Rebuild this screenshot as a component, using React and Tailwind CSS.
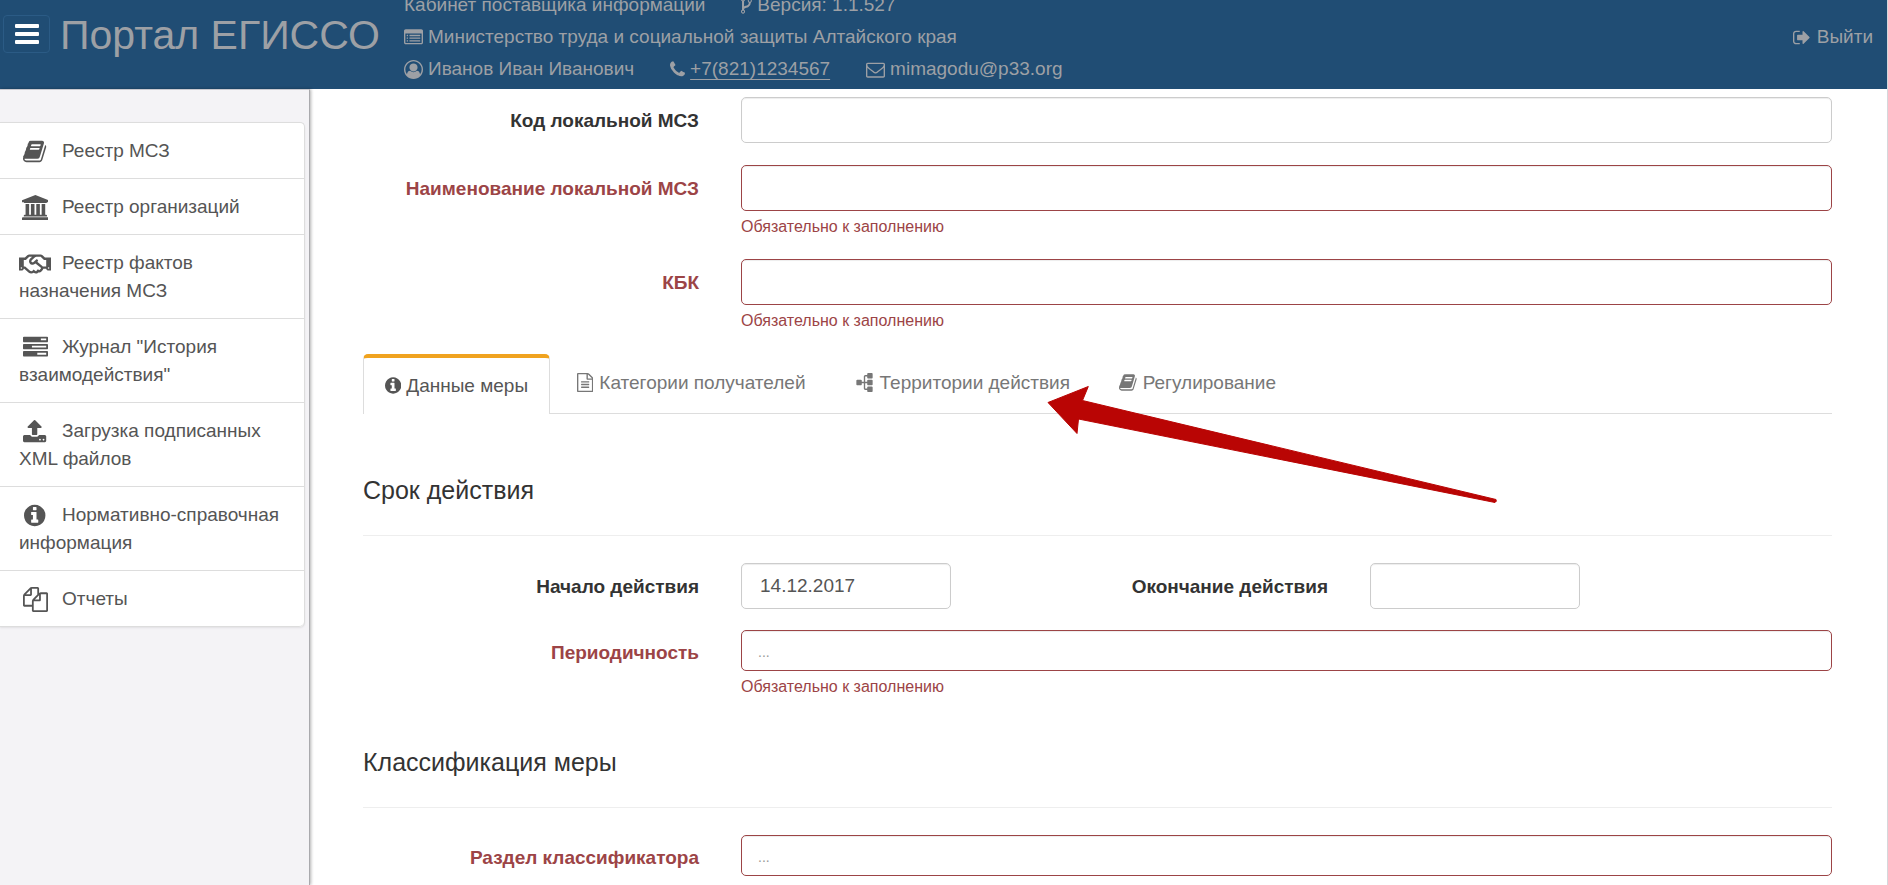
import React from "react";
import { FaRegHandshake } from "react-icons/fa";

const ICONS = {
  book: ["64 0 1664 1792", "M1703 478q40 57 18 129l-275 906q-19 64-76.5 107.5t-122.5 43.5h-923q-77 0-148.5-53.5t-99.5-131.5q-24-67-2-127 0-4 3-27t4-37q1-8-3-21.5t-3-19.5q2-11 8-21t16.5-23.5 16.5-23.5q23-38 45-91.5t30-91.5q3-10 .5-30t-.5-28q3-11 17-28t17-23q21-36 42-92t25-90q1-9-2.5-32t.5-28q4-13 22-30.5t22-22.5q19-26 42.5-84.5t27.5-96.5q1-8-3-25.5t-2-26.5q2-8 9-18t18-23 17-21q8-12 16.5-30.5t15-35 16-36 19.5-32 26.5-23.5 36-11.5 47.5 5.5l-1 3q38-9 51-9h761q74 0 114 56t18 130l-274 906q-36 119-71.5 153.5t-128.5 34.5h-869q-27 0-38 15-11 16-1 43 24 70 144 70h923q29 0 56-15.5t35-41.5l300-987q7-22 5-57 38 15 59 43zm-1064 2q-4 13 2 22.5t20 9.5h608q13 0 25.5-9.5t16.5-22.5l21-64q4-13-2-22.5t-20-9.5h-608q-13 0-25.5 9.5t-16.5 22.5zm-83 256q-4 13 2 22.5t20 9.5h608q13 0 25.5-9.5t16.5-22.5l21-64q4-13-2-22.5t-20-9.5h-608q-13 0-25.5 9.5t-16.5 22.5z"],
  bank: ["0 0 1920 1792", "M960 0l960 384v128h-128q0 26-20.5 45t-48.5 19h-1526q-28 0-48.5-19t-20.5-45h-128v-128zm-704 640h256v768h128v-768h256v768h128v-768h256v768h128v-768h256v768h59q28 0 48.5 19t20.5 45v64h-1664v-64q0-26 20.5-45t48.5-19h59v-768zm1595 960q28 0 48.5 19t20.5 45v128h-1920v-128q0-26 20.5-45t48.5-19h1782z"],
  tasks: ["0 0 1792 1792", "M1024 1408h640v-128h-640v128zm-384-512h1024v-128h-1024v128zm640-512h384v-128h-384v128zm512 832v256q0 26-19 45t-45 19h-1664q-26 0-45-19t-19-45v-256q0-26 19-45t45-19h1664q26 0 45 19t19 45zm0-512v256q0 26-19 45t-45 19h-1664q-26 0-45-19t-19-45v-256q0-26 19-45t45-19h1664q26 0 45 19t19 45zm0-512v256q0 26-19 45t-45 19h-1664q-26 0-45-19t-19-45v-256q0-26 19-45t45-19h1664q26 0 45 19t19 45z"],
  upload: ["64 0 1664 1792", "M1344 1472q0-26-19-45t-45-19-45 19-19 45 19 45 45 19 45-19 19-45zm256 0q0-26-19-45t-45-19-45 19-19 45 19 45 45 19 45-19 19-45zm128-224v320q0 40-28 68t-68 28h-1472q-40 0-68-28t-28-68v-320q0-40 28-68t68-28h427q21 56 70.5 92t110.5 36h256q61 0 110.5-36t70.5-92h427q40 0 68 28t28 68zm-325-648q-17 40-59 40h-256v448q0 26-19 45t-45 19h-256q-26 0-45-19t-19-45v-448h-256q-42 0-59-40-17-39 14-69l448-448q18-19 45-19t45 19l448 448q31 30 14 69z"],
  info: ["128 0 1536 1792", "M1152 1376v-160q0-14-9-23t-23-9h-96v-512q0-14-9-23t-23-9h-320q-14 0-23 9t-9 23v160q0 14 9 23t23 9h96v320h-96q-14 0-23 9t-9 23v160q0 14 9 23t23 9h448q14 0 23-9t9-23zm-128-896v-160q0-14-9-23t-23-9h-192q-14 0-23 9t-9 23v160q0 14 9 23t23 9h192q14 0 23-9t9-23zm640 416q0 209-103 385.5t-279.5 279.5-385.5 103-385.5-103-279.5-279.5-103-385.5 103-385.5 279.5-279.5 385.5-103 385.5 103 279.5 279.5 103 385.5z"],
  files: ["0 0 1792 1792", "M1696 384q40 0 68 28t28 68v1216q0 40-28 68t-68 28h-960q-40 0-68-28t-28-68v-288h-544q-40 0-68-28t-28-68v-672q0-40 20-88t48-76l408-408q28-28 76-48t88-20h416q40 0 68 28t28 68v328q68-40 128-40h416zm-544 213l-299 299h299v-299zm-640-384l-299 299h299v-299zm196 647l316-316v-416h-384v416q0 40-28 68t-68 28h-416v640h512v-256q0-40 20-88t48-76zm956 804v-1152h-384v416q0 40-28 68t-68 28h-416v640h896z"],
  listAlt: ["0 0 1792 1792", "M384 1184v64q0 13-9.5 22.5t-22.5 9.5h-64q-13 0-22.5-9.5t-9.5-22.5v-64q0-13 9.5-22.5t22.5-9.5h64q13 0 22.5 9.5t9.5 22.5zm0-256v64q0 13-9.5 22.5t-22.5 9.5h-64q-13 0-22.5-9.5t-9.5-22.5v-64q0-13 9.5-22.5t22.5-9.5h64q13 0 22.5 9.5t9.5 22.5zm0-256v64q0 13-9.5 22.5t-22.5 9.5h-64q-13 0-22.5-9.5t-9.5-22.5v-64q0-13 9.5-22.5t22.5-9.5h64q13 0 22.5 9.5t9.5 22.5zm1152 512v64q0 13-9.5 22.5t-22.5 9.5h-960q-13 0-22.5-9.5t-9.5-22.5v-64q0-13 9.5-22.5t22.5-9.5h960q13 0 22.5 9.5t9.5 22.5zm0-256v64q0 13-9.5 22.5t-22.5 9.5h-960q-13 0-22.5-9.5t-9.5-22.5v-64q0-13 9.5-22.5t22.5-9.5h960q13 0 22.5 9.5t9.5 22.5zm0-256v64q0 13-9.5 22.5t-22.5 9.5h-960q-13 0-22.5-9.5t-9.5-22.5v-64q0-13 9.5-22.5t22.5-9.5h960q13 0 22.5 9.5t9.5 22.5zm128 704v-832q0-13-9.5-22.5t-22.5-9.5h-1472q-13 0-22.5 9.5t-9.5 22.5v832q0 13 9.5 22.5t22.5 9.5h1472q13 0 22.5-9.5t9.5-22.5zm128-1088v1088q0 66-47 113t-113 47h-1472q-66 0-113-47t-47-113v-1088q0-66 47-113t113-47h1472q66 0 113 47t47 113z"],
  user: ["0 0 1792 1792", "M896 0q182 0 348 71t286 191 191 286 71 348q0 181-70.5 347t-190.5 286-286 191.5-349 71.5-349-71-285.5-191.5-190.5-286-71-347.5 71-348 191-286 286-191 348-71zm619 1351q149-205 149-455 0-156-61-298t-164-245-245-164-298-61-298 61-245 164-164 245-61 298q0 250 149 455 66-327 306-327 131 128 313 128t313-128q240 0 306 327zm-235-647q0-159-112.5-271.5t-271.5-112.5-271.5 112.5-112.5 271.5 112.5 271.5 271.5 112.5 271.5-112.5 112.5-271.5z"],
  phone: ["192 0 1408 1792", "M1600 1240q0 27-10 70.5t-21 68.5q-21 50-122 106-94 51-186 51-27 0-53-3.5t-57.5-12.5-47-14.5-55.5-20.5-49-18q-98-35-175-83-127-79-264-216t-216-264q-48-77-83-175-3-9-18-49t-20.5-55.5-14.5-47-12.5-57.5-3.5-53q0-92 51-186 56-101 106-122 25-11 68.5-21t70.5-10q14 0 21 3 18 6 53 76 11 19 30 54t35 63.5 31 53.5q3 4 17.5 25t21.5 35.5 7 28.5q0 20-28.5 50t-62 55-62 53-28.5 46q0 9 5 22.5t8.5 20.5 14 24 11.5 19q76 137 174 235t235 174q2 1 19 11.5t24 14 20.5 8.5 22.5 5q18 0 46-28.5t53-62 55-62 50-28.5q14 0 28.5 7t35.5 21.5 25 17.5q25 15 53.5 31t63.5 35 54 30q70 35 76 53 3 7 3 21z"],
  mail: ["0 0 1792 1792", "M1664 1504v-768q-32 36-69 66-268 206-426 338-51 43-83 67t-86.5 48.5-102.5 24.5h-2q-48 0-102.5-24.5t-86.5-48.5-83-67q-158-132-426-338-37-30-69-66v768q0 13 9.5 22.5t22.5 9.5h1472q13 0 22.5-9.5t9.5-22.5zm0-1051v-24.5l-.5-13-3-12.5-5.5-9-9-7.5-14-2.5h-1472q-13 0-22.5 9.5t-9.5 22.5q0 168 147 284 193 152 401 317 6 5 35 29.5t46 37.5 44.5 31.5 50.5 27.5 43 9h2q20 0 43-9t50.5-27.5 44.5-31.5 46-37.5 35-29.5q208-165 401-317 54-43 100.5-115.5t46.5-131.5zm128-37v1088q0 66-47 113t-113 47h-1472q-66 0-113-47t-47-113v-1088q0-66 47-113t113-47h1472q66 0 113 47t47 113z"],
  signOut: ["64 0 1568 1792", "M704 1440q0 4 1 20t.5 26.5-3 23.5-10 19.5-20.5 6.5h-320q-119 0-203.5-84.5t-84.5-203.5v-704q0-119 84.5-203.5t203.5-84.5h320q13 0 22.5 9.5t9.5 22.5q0 4 1 20t.5 26.5-3 23.5-10 19.5-20.5 6.5h-320q-66 0-113 47t-47 113v704q0 66 47 113t113 47h312l11.5 1 11.5 3 8 5.5 7 9 2 13.5zm928-544q0 26-19 45l-544 544q-19 19-45 19t-45-19-19-45v-288h-448q-26 0-45-19t-19-45v-384q0-26 19-45t45-19h448v-288q0-26 19-45t45-19 45 19l544 544q19 19 19 45z"],
  fileText: ["128 0 1536 1792", "M1596 380q28 28 48 76t20 88v1152q0 40-28 68t-68 28h-1344q-40 0-68-28t-28-68v-1600q0-40 28-68t68-28h896q40 0 88 20t76 48zm-444-244v376h376q-10-29-22-41l-313-313q-12-12-41-22zm384 1528v-1024h-416q-40 0-68-28t-28-68v-416h-768v1536h1280zm-1024-864q0-14 9-23t23-9h704q14 0 23 9t9 23v64q0 14-9 23t-23 9h-704q-14 0-23-9t-9-23v-64zm736 224q14 0 23 9t9 23v64q0 14-9 23t-23 9h-704q-14 0-23-9t-9-23v-64q0-14 9-23t23-9h704zm0 256q14 0 23 9t9 23v64q0 14-9 23t-23 9h-704q-14 0-23-9t-9-23v-64q0-14 9-23t23-9h704z"],
  sitemap: ["0 0 1792 1792", "M1792 1248v320q0 40-28 68t-68 28h-320q-40 0-68-28t-28-68v-320q0-40 28-68t68-28h96v-192h-512v192h96q40 0 68 28t28 68v320q0 40-28 68t-68 28h-320q-40 0-68-28t-28-68v-320q0-40 28-68t68-28h96v-192h-512v192h96q40 0 68 28t28 68v320q0 40-28 68t-68 28h-320q-40 0-68-28t-28-68v-320q0-40 28-68t68-28h96v-192q0-52 38-90t90-38h512v-192h-96q-40 0-68-28t-28-68v-320q0-40 28-68t68-28h320q40 0 68 28t28 68v320q0 40-28 68t-68 28h-96v192h512q52 0 90 38t38 90v192h96q40 0 68 28t28 68z"],
  fork: ["384 0 1024 1792", "M672 1472q0-40-28-68t-68-28-68 28-28 68 28 68 68 28 68-28 28-68zm0-1152q0-40-28-68t-68-28-68 28-28 68 28 68 68 28 68-28 28-68zm640 128q0-40-28-68t-68-28-68 28-28 68 28 68 68 28 68-28 28-68zm96 0q0 52-26 96.5t-70 69.5q-2 287-226 414-67 38-203 81-128 40-169.5 71t-41.5 100v26q44 25 70 69.5t26 96.5q0 80-56 136t-136 56-136-56-56-136q0-52 26-96.5t70-69.5v-820q-44-25-70-69.5t-26-96.5q0-80 56-136t136-56 136 56 56 136q0 52-26 96.5t-70 69.5v497q54-26 154-57 55-17 87.5-29.5t70.5-31 59-39.5 40.5-51 28-69.5 8.5-91.5q-44-25-70-69.5t-26-96.5q0-80 56-136t136-56 136 56 56 136z"],
};

function Icon({ name, className = "h-[19px]" }) {
  const [box, d] = ICONS[name];
  return (
    <svg viewBox={box} fill="currentColor" aria-hidden="true" className={`w-auto shrink-0 ${className}`}>
      <path d={d} />
    </svg>
  );
}

const MENU = [
  ["book", "Реестр МСЗ"],
  ["bank", "Реестр организаций"],
  ["handshake", "Реестр фактов назначения МСЗ"],
  ["tasks", 'Журнал "История взаимодействия"'],
  ["upload", "Загрузка подписанных XML файлов"],
  ["info", "Нормативно-справочная информация"],
  ["files", "Отчеты"],
];

const TABS = [
  ["fileText", "Категории получателей", ""],
  ["sitemap", "Территории действия", "-rotate-90"],
  ["book", "Регулирование", ""],
];

const REQUIRED = "Обязательно к заполнению";

function Header() {
  return (
    <header className="flex h-[89px] shrink-0 items-start overflow-hidden bg-[#204d74] text-[#9da0a5]">
      <button
        type="button"
        aria-label="Меню"
        className="mt-[15px] ml-[3px] flex h-[38px] w-[47px] flex-col items-center justify-center gap-1 rounded-[4px] border border-[#2b5b85]"
      >
        <span className="h-1 w-6 rounded-[1px] bg-white" />
        <span className="h-1 w-6 rounded-[1px] bg-white" />
        <span className="h-1 w-6 rounded-[1px] bg-white" />
      </button>
      <h1 className="mt-[11px] ml-[10px] w-[344px] shrink-0 text-[41px] leading-[48px] whitespace-nowrap">Портал ЕГИССО</h1>
      <div className="-mt-[11px] flex-1 text-[19px] leading-8 whitespace-nowrap">
        <div className="flex">
          <span>Кабинет поставщика информации</span>
          <span className="ml-9 flex items-center gap-[5px]">
            <Icon name="fork" />
            Версия: 1.1.527
          </span>
        </div>
        <div className="flex items-center gap-[5px]">
          <Icon name="listAlt" />
          Министерство труда и социальной защиты Алтайского края
        </div>
        <div className="flex gap-9">
          <span className="flex items-center gap-[5px]">
            <Icon name="user" />
            Иванов Иван Иванович
          </span>
          <span className="flex items-center gap-[5px]">
            <Icon name="phone" />
            <a href="tel:+78211234567" className="underline decoration-1 underline-offset-4">+7(821)1234567</a>
          </span>
          <span className="flex items-center gap-[5px]">
            <Icon name="mail" />
            mimagodu@p33.org
          </span>
        </div>
      </div>
      <a href="#logout" className="mt-[21px] mr-[14px] flex items-center gap-[7px] text-[19px] leading-8">
        <Icon name="signOut" />
        Выйти
      </a>
    </header>
  );
}

function Sidebar() {
  return (
    <aside className="w-[310px] shrink-0 border-t border-r border-t-[#c9c9cf] border-r-[#a9a9ad] bg-[#f4f3f6] pt-8 shadow-[1px_0_3px_rgba(0,0,0,0.3)]">
      <nav className="mr-1 rounded-r-[5px] border-t border-r border-[#dddddd] bg-white shadow-[0_1px_2px_rgba(0,0,0,0.08)]">
        {MENU.map(([icon, text]) => (
          <a
            key={icon}
            href={`#${icon}`}
            className="block border-b border-[#dddddd] pt-[14px] pr-4 pb-[13px] pl-[19px] text-[19px] leading-7 text-[#555555] last:rounded-br-[5px]"
          >
            <span className="mr-[11px] inline-flex h-5 w-8 items-center justify-center align-middle">
              {icon === "handshake" ? (
                <FaRegHandshake className="h-[26px] w-8" />
              ) : (
                <Icon name={icon} className="h-[25px]" />
              )}
            </span>
            {text}
          </a>
        ))}
      </nav>
    </aside>
  );
}

function Field({ id, label, error, message, short }) {
  return (
    <div className="flex gap-[42px]">
      <label
        htmlFor={id}
        className={`flex w-[336px] shrink-0 items-center justify-end text-[19px] leading-[27px] font-bold ${short ? "h-11" : "h-[46px]"} ${error ? "text-[#9c4446]" : "text-[#333333]"}`}
      >
        {label}
      </label>
      <div className="min-w-0 flex-1">
        <input
          id={id}
          type="text"
          placeholder={short ? "..." : undefined}
          className={`block w-full rounded-[5px] border bg-white text-[19px] shadow-[inset_0_1px_1px_rgba(0,0,0,0.075)] outline-none placeholder:text-[14px] placeholder:text-[#999999] ${short ? "h-[41px] px-4" : "h-[46px] px-[18px]"} ${error ? "border-[#9c4446]" : "border-[#cccccc]"}`}
        />
        {message && <p className="mt-1 text-[16px] leading-[23px] text-[#9c4446]">{message}</p>}
      </div>
    </div>
  );
}

function DateField({ id, label, value, labelClass }) {
  return (
    <div className="flex items-center gap-[42px]">
      <label htmlFor={id} className={`shrink-0 text-right text-[19px] leading-[27px] font-bold text-[#333333] ${labelClass}`}>
        {label}
      </label>
      <input
        id={id}
        type="text"
        defaultValue={value}
        className="h-[46px] w-[210px] rounded-[5px] border border-[#cccccc] bg-white px-[18px] text-[19px] text-[#555555] shadow-[inset_0_1px_1px_rgba(0,0,0,0.075)] outline-none"
      />
    </div>
  );
}

function Arrow() {
  return (
    <svg viewBox="0 0 450 50" aria-hidden="true" className="pointer-events-none absolute top-8 left-[684px] h-[50px] w-[450px] overflow-visible">
      <path
        d="M1 16.500 41.300 .5 35.500 14.500 449 113.500Q450 115.500 448 116.500L31.500 33 30 47.500Z"
        fill="#b90504"
        stroke="#b90504"
        strokeLinejoin="round"
      />
    </svg>
  );
}

export default function App() {
  return (
    <div className="flex h-screen flex-col overflow-hidden border-r border-[#d5d8dc] bg-white font-['Liberation_Sans',Arial,sans-serif] text-[#333333]">
      <Header />
      <div className="flex min-h-0 flex-1">
        <Sidebar />
        <main className="min-w-0 flex-1 overflow-hidden pt-2 pr-[55px] pl-[53px]">
          <form>
            <Field id="code" label="Код локальной МСЗ" />
            <div className="mt-[22px]">
              <Field id="name" label="Наименование локальной МСЗ" error message={REQUIRED} />
            </div>
            <div className="mt-[21px]">
              <Field id="kbk" label="КБК" error message={REQUIRED} />
            </div>

            <div className="relative mt-[22px]">
              <div role="tablist" className="flex h-[60px] gap-[5px] border-b border-[#dddddd] text-[19px] leading-[27px] whitespace-nowrap">
                <button
                  type="button"
                  role="tab"
                  aria-selected="true"
                  className="-mb-px flex h-[60px] items-center gap-[5px] rounded-t-[5px] border-x border-t-4 border-x-[#dddddd] border-t-[#f0a31f] bg-white px-[21px] pb-[2px] text-[#555555]"
                >
                  <Icon name="info" />
                  Данные меры
                </button>
                {TABS.map(([icon, text, turn]) => (
                  <button key={text} type="button" role="tab" aria-selected="false" className="flex h-[56px] items-center gap-[6px] px-[22px] text-[#777777]">
                    <Icon name={icon} className={`h-[19px] ${turn}`} />
                    {text}
                  </button>
                ))}
              </div>
              <Arrow />
            </div>

            <h2 className="mt-[60px] border-b border-[#eeeeee] pb-[29px] text-[25px] leading-8">Срок действия</h2>
            <div className="mt-[27px] flex">
              <DateField id="start" label="Начало действия" value="14.12.2017" labelClass="w-[336px]" />
              <DateField id="end" label="Окончание действия" labelClass="w-[377px]" />
            </div>
            <div className="mt-[21px]">
              <Field id="period" label="Периодичность" error message={REQUIRED} short />
            </div>

            <h2 className="mt-12 border-b border-[#eeeeee] pb-[29px] text-[25px] leading-8">Классификация меры</h2>
            <div className="mt-[27px]">
              <Field id="section" label="Раздел классификатора" error short />
            </div>
          </form>
        </main>
      </div>
    </div>
  );
}
